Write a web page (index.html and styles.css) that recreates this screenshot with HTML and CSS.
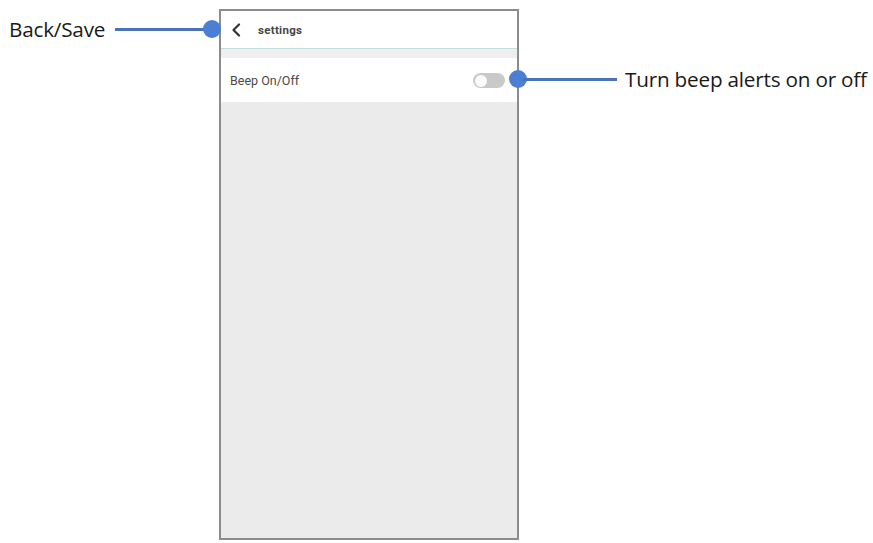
FILE: index.html
```html
<!DOCTYPE html>
<html>
<head>
<meta charset="utf-8">
<link rel="stylesheet" href="styles.css">
</head>
<body>
<div class="stage">
  <div class="phone">
    <div class="header">
      <svg class="back" width="10" height="14" viewBox="0 0 10 14"><polyline points="8,1.5 2.5,7 8,12.5" fill="none" stroke="#333" stroke-width="2.2" stroke-linecap="round" stroke-linejoin="round"/></svg>
      <span class="title">settings</span>
    </div>
    <div class="gap"></div>
    <div class="row">
      <span class="label">Beep On/Off</span>
      <span class="toggle"><span class="knob"></span></span>
    </div>
    <div class="rest"></div>
  </div>

  <div class="callout callout-left">
    <span class="ctext">Back/Save</span>
    <span class="cline"></span>
    <span class="cdot"></span>
  </div>
  <div class="callout callout-right">
    <span class="cdot"></span>
    <span class="cline"></span>
    <span class="ctext">Turn beep alerts on or off</span>
  </div>
</div>
</body>
</html>
```

FILE: styles.css
```css
html, body {
  margin: 0;
  padding: 0;
  background: #ffffff;
}
.stage {
  position: relative;
  width: 873px;
  height: 543px;
  overflow: hidden;
}
.phone {
  margin: 9px 0 0 219px;
  width: 296px;
  height: 527px;
  border: 2px solid #8c8c8c;
  background: #ebebeb;
  display: flex;
  flex-direction: column;
}
.header {
  height: 37px;
  background: #ffffff;
  border-bottom: 1px solid #bfe0dc;
  display: flex;
  align-items: center;
  padding-left: 10px;
  flex-shrink: 0;
}
.back {
  display: block;
}
.title {
  margin-left: 17px;
  font-family: Roboto, "Liberation Sans", sans-serif;
  font-weight: 700;
  font-size: 11.5px;
  letter-spacing: 0.3px;
  color: #454545;
  margin-top: 1px;
}
.gap {
  height: 9px;
  background: #efefef;
  flex-shrink: 0;
}
.row {
  height: 44px;
  background: #ffffff;
  display: flex;
  align-items: center;
  justify-content: space-between;
  padding: 0 12px 0 9px;
  flex-shrink: 0;
}
.label {
  font-family: Roboto, "Liberation Sans", sans-serif;
  font-size: 12.5px;
  color: #4a4a4a;
}
.toggle {
  width: 32px;
  height: 15px;
  border-radius: 8px;
  background: #c9c9c9;
  display: flex;
  align-items: center;
  padding-left: 2px;
  box-sizing: border-box;
  margin-top: 1px;
}
.knob {
  width: 12px;
  height: 12px;
  border-radius: 50%;
  background: #fbfbfb;
}
.rest {
  flex: 1;
}
.callout {
  position: absolute;
  display: flex;
  align-items: center;
}
.callout-left {
  left: 9px;
  top: 18px;
  height: 22px;
}
.callout-right {
  left: 509px;
  top: 68px;
  height: 22px;
}
.ctext {
  font-family: "Open Sans", sans-serif;
  font-size: 20.7px;
  color: #1a1a1a;
  letter-spacing: -0.2px;
  white-space: nowrap;
}
.cline {
  height: 3px;
  background: #4a72b8;
}
.callout-left .cline {
  margin-left: 10px;
  width: 92px;
}
.callout-left .cdot {
  margin-left: -4px;
}
.callout-right .cline {
  width: 94px;
  margin-left: -4px;
}
.callout-right .ctext {
  margin-left: 8px;
}
.cdot {
  width: 18px;
  height: 18px;
  border-radius: 50%;
  background: #4a7fd3;
  flex-shrink: 0;
}
```
